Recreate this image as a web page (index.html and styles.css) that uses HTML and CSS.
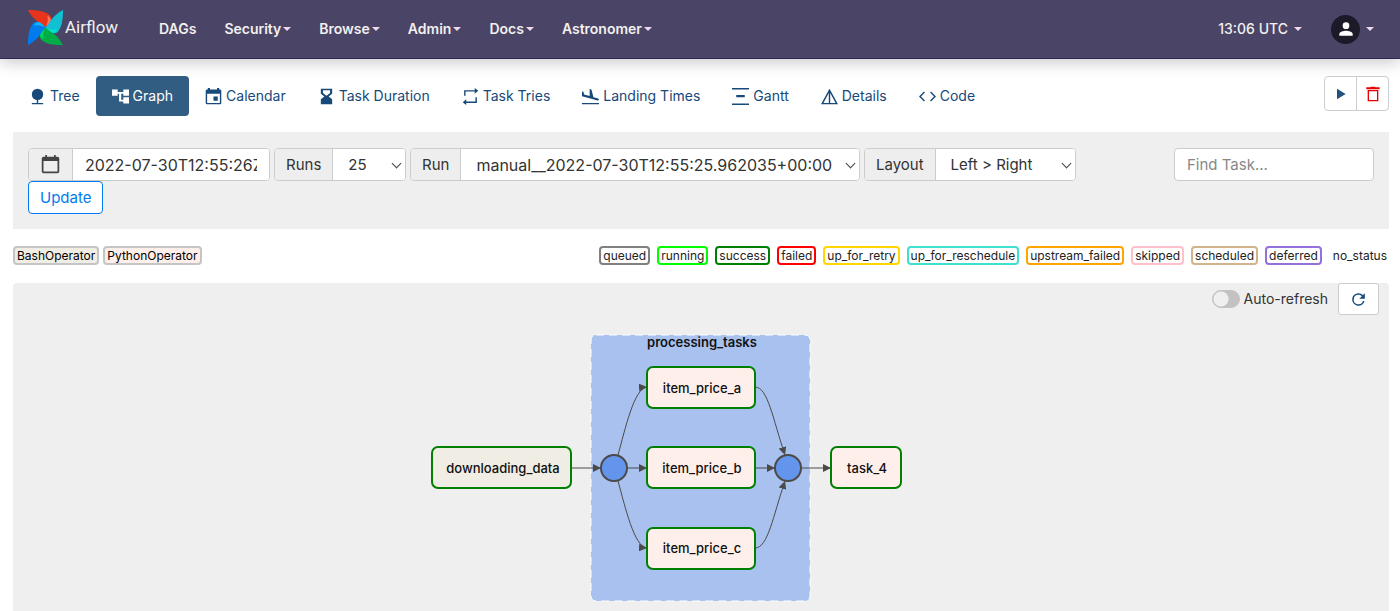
FILE: index.html
```html
<!DOCTYPE html>
<html lang="en">
<head>
<meta charset="utf-8">
<title>Airflow - Graph</title>
<link rel="stylesheet" href="styles.css">
</head>
<body>
<header class="navbar">
  <a class="brand" href="#">
    <svg class="brand-mark" viewBox="0 0 36 36" aria-hidden="true">
      <g><path fill="#e8341c" d="M0 0C9 0 17 1 22 5C25 8 25 11 18 18C15 14 7 13 0 0Z"/><path fill="#ff7557" d="M20 6C25 9 25 12 18 18C20 14 21 11 20 6Z"/></g>
      <g transform="rotate(90 18 18)"><path fill="#11c1d3" d="M0 0C9 0 17 1 22 5C25 8 25 11 18 18C15 14 7 13 0 0Z"/><path fill="#00e5cc" d="M20 6C25 9 25 12 18 18C20 14 21 11 20 6Z"/></g>
      <g transform="rotate(180 18 18)"><path fill="#00ad46" d="M0 0C9 0 17 1 22 5C25 8 25 11 18 18C15 14 7 13 0 0Z"/><path fill="#04d659" d="M20 6C25 9 25 12 18 18C20 14 21 11 20 6Z"/></g>
      <g transform="rotate(270 18 18)"><path fill="#017cee" d="M0 0C9 0 17 1 22 5C25 8 25 11 18 18C15 14 7 13 0 0Z"/><path fill="#0cb6ff" d="M20 6C25 9 25 12 18 18C20 14 21 11 20 6Z"/></g>
    </svg>
    <span>Airflow</span>
  </a>
  <nav class="menu" aria-label="Main">
    <a href="#">DAGs</a>
    <a class="caret" href="#">Security</a>
    <a class="caret" href="#">Browse</a>
    <a class="caret" href="#">Admin</a>
    <a class="caret" href="#">Docs</a>
    <a class="caret" href="#">Astronomer</a>
  </nav>
  <a class="clock caret" href="#">13:06 UTC</a>
  <a class="user caret" href="#" aria-label="User menu">
    <span class="avatar"><svg viewBox="0 0 24 24"><circle cx="12" cy="8" r="4"/><path d="M12 14C9.300 14 4 15.300 4 18V20H20V18C20 15.300 14.700 14 12 14Z"/></svg></span>
  </a>
</header>

<main class="page">
  <div class="toolbar">
    <nav class="tabs" aria-label="DAG views">
      <a href="#"><svg viewBox="0 0 24 24"><circle cx="12" cy="9" r="8"/><path d="M11 16h2v5h-2zM4 21h16v2H4z"/></svg>Tree</a>
      <a class="active" href="#"><svg viewBox="0 0 24 24"><path d="M24 11V2h-8v3.500H8V2H0v9h8V8h2v11h6v3h8v-9h-8v3.500h-3V8h3v3z"/></svg>Graph</a>
      <a href="#"><svg viewBox="0 0 24 24"><path d="M18 12h-6v6h6v-6zM17 0v2H7V0H4v2H3C1.900 2 1 2.900 1 4v17a2 2 0 0 0 2 2h18c1.100 0 2-.9 2-2V4c0-1.100-.9-2-2-2h-1V0h-3zm4 21H3V8h18v13z"/></svg>Calendar</a>
      <a href="#"><svg viewBox="0 0 24 24"><path d="M4 1v7l5 4-5 4v7h16v-7l-5-4 5-4V1H4zm13 6l-5 4-5-4V3h10v4z"/></svg>Task Duration</a>
      <a href="#"><svg viewBox="0 0 24 24"><path d="M3 3h15V0l5 4-5 4V5H5v6H3zM21 21H6v3l-5-4 5-4v3h13v-6h2z"/></svg>Task Tries</a>
      <a href="#"><svg viewBox="0 0 24 24"><path d="M0 21h24v2H0zM8 13.800l14 3.800c.8.200 1.600-.3 1.800-1 .2-.8-.2-1.600-1-1.800l-6.600-1.800L13.300 2l-2.500-.6v9.800l-7.800-2.200L2 5.300l-2-.4v6.600z"/></svg>Landing Times</a>
      <a href="#"><svg viewBox="0 0 24 24"><path d="M0 0h24v2H0zM6 10h12v3H6zM0 22h24v2H0z"/></svg>Gantt</a>
      <a href="#"><svg viewBox="0 0 24 24"><path fill-rule="evenodd" d="M12 1L0 23h24zM11 7v14H3.400zM13 7l7.600 14H13z"/></svg>Details</a>
      <a href="#"><svg viewBox="0 0 24 24"><path d="M8.400 17.600L2.800 12l5.600-5.600L7 5l-7 7 7 7zM15.600 17.600l5.600-5.600-5.600-5.600L17 5l7 7-7 7z"/></svg>Code</a>
    </nav>
    <div class="actions">
      <button type="button" aria-label="Trigger DAG"><svg viewBox="0 0 24 24"><path d="M6 4v16l13-8z"/></svg></button>
      <button class="danger" type="button" aria-label="Delete DAG"><svg viewBox="0 0 24 24"><path fill-rule="evenodd" d="M16 2l-1-1H9L8 2H2v3h20V2zM4 6v17h16V6zm2 2h12v13H6z"/></svg></button>
    </div>
  </div>

  <form class="filters">
    <div class="fields">
      <div class="group date">
        <label for="base-date" aria-label="Base date"><svg viewBox="0 0 24 24"><path d="M20 3h-2V1h-2v2H8V1H6v2H4a2 2 0 0 0-2 2v15a2 2 0 0 0 2 2h16a2 2 0 0 0 2-2V5a2 2 0 0 0-2-2zm0 17H4V8h16v12z"/></svg></label>
        <input id="base-date" type="text" value="2022-07-30T12:55:26Z">
      </div>
      <div class="group pick runs"><label for="runs">Runs</label><select id="runs"><option>25</option></select></div>
      <div class="group pick run"><label for="run">Run</label><select id="run"><option>manual__2022-07-30T12:55:25.962035+00:00</option></select></div>
      <div class="group pick layout"><label for="layout">Layout</label><select id="layout"><option>Left &gt; Right</option></select></div>
      <button class="update" type="submit">Update</button>
    </div>
    <input class="search" type="search" placeholder="Find Task..." aria-label="Find Task">
  </form>

  <div class="legend">
    <div class="operators"><span class="bash">BashOperator</span><span class="python">PythonOperator</span></div>
    <div class="states">
      <span class="queued">queued</span><span class="running">running</span><span class="success">success</span><span class="failed">failed</span><span class="retry">up_for_retry</span><span class="reschedule">up_for_reschedule</span><span class="upstream">upstream_failed</span><span class="skipped">skipped</span><span class="scheduled">scheduled</span><span class="deferred">deferred</span><span class="none">no_status</span>
    </div>
  </div>

  <section class="graph">
    <div class="graph-tools">
      <label class="switch"><input type="checkbox">Auto-refresh</label>
      <button type="button" aria-label="Refresh"><svg viewBox="0 0 24 24"><path d="M17.650 6.350A7.960 7.960 0 0 0 12 4a8 8 0 1 0 7.730 10h-2.080A6 6 0 1 1 12 6c1.660 0 3.140.69 4.220 1.780L13 11h7V4z"/></svg></button>
    </div>
    <svg class="dag" viewBox="431 315 540 296" role="img" aria-label="DAG graph">
      <defs>
        <marker id="arrow" viewBox="0 0 8 8" refX="8" refY="4" markerWidth="8" markerHeight="8" markerUnits="userSpaceOnUse" orient="auto"><path class="arrowhead" d="M0 0L8 4L0 8z"/></marker>
      </defs>
      <rect class="cluster" x="591" y="335" width="219" height="266" rx="5"/>
      <text class="cluster-name" x="702" y="347">processing_tasks</text>
      <g class="edges">
        <path d="M572 468H601"/>
        <path d="M618 455C625 430 634 388 647 387"/>
        <path d="M628 468H647"/>
        <path d="M618 481C625 506 634 547 647 548"/>
        <path d="M755 387C768 387 773 420 785 455"/>
        <path d="M755 468H775"/>
        <path d="M755 548C768 548 773 516 785 481"/>
        <path d="M802 468H831"/>
      </g>
      <circle class="join" cx="614" cy="468" r="13"/>
      <circle class="join" cx="788" cy="468" r="13"/>
      <g class="task">
        <rect class="bash-node" x="432" y="447" width="139" height="41" rx="6"/><text x="503" y="473">downloading_data</text>
        <rect x="647" y="367" width="108" height="41" rx="6"/><text x="702" y="393">item_price_a</text>
        <rect x="647" y="447" width="108" height="41" rx="6"/><text x="702" y="473">item_price_b</text>
        <rect x="647" y="528" width="108" height="41" rx="6"/><text x="702" y="553">item_price_c</text>
        <rect x="831" y="447" width="70" height="41" rx="6"/><text x="867" y="473">task_4</text>
      </g>
    </svg>
  </section>
</main>
</body>
</html>
```
FILE: styles.css
```css
* { box-sizing: border-box; }
body {
  margin: 0;
  min-height: 100vh;
  display: flex;
  flex-direction: column;
  font: 14px/20px Inter, "Liberation Sans", sans-serif;
  color: #333;
  background: #fff;
}
a { color: inherit; text-decoration: none; }
button, input, select { font: inherit; color: inherit; }
svg { display: block; fill: currentColor; }

.navbar {
  height: 59px;
  display: flex;
  align-items: center;
  padding: 0 26px 0 28px;
  background: #4a4466;
  border-bottom: 1px solid #2f2750;
  box-shadow: 0 2px 16px rgba(0, 0, 0, .25);
  color: #f2f0ee;
  font-weight: 600;
}
.brand { display: flex; align-items: center; gap: 2px; width: 131px; font: 400 17px/24px Roboto, sans-serif; padding-bottom: 4px; }
.brand-mark { width: 35px; height: 35px; }
.menu { display: flex; flex: 1; gap: 28px; }
.caret { display: flex; align-items: center; gap: 2px; }
.caret::after { content: ""; border: 4px solid transparent; border-top-color: #efd9ee; border-bottom: 0; }
.clock { gap: 6px; margin-right: 29px; font-weight: 500; }
.user { gap: 6px; }
.avatar { width: 29px; height: 29px; border-radius: 50%; background: #1c1a28; color: #fff; display: grid; place-items: center; }
.avatar svg { width: 20px; height: 20px; }

.page { flex: 1; display: flex; flex-direction: column; padding: 0 11px 0 13px; }
.toolbar { display: flex; justify-content: space-between; align-items: flex-start; padding: 17px 0 16px; }
.tabs { display: flex; color: #17497a; }
.tabs a { height: 40px; display: flex; align-items: center; gap: 4px; padding: 0 16px; border-radius: 4px; }
.tabs svg { width: 17px; height: 17px; }
.tabs .active { background: #325d83; color: #fff; }
.actions { display: flex; color: #23527c; }
.actions button { width: 33px; height: 35px; display: grid; place-items: center; padding: 0; background: #fff; border: 1px solid #ccc; border-radius: 4px 0 0 4px; }
.actions button + button { margin-left: -1px; border-radius: 0 4px 4px 0; }
.actions svg { width: 16px; height: 16px; }
.actions .danger { color: #e80000; }

.filters { display: flex; justify-content: space-between; align-items: flex-start; padding: 16px 15px 15px; background: #efefef; font-size: 15px; }
.fields { display: flex; flex-wrap: wrap; column-gap: 4px; width: 83%; }
.group { position: relative; display: flex; height: 33px; border: 1px solid #ccc; border-radius: 4px; background: #fff; overflow: hidden; }
.group label { display: grid; place-items: center; background: #eee; border-right: 1px solid #ccc; padding: 0 11px; }
.group input, .group select { flex: 1; min-width: 0; border: 0; background: #fff; padding: 0 12px; }
.group select { appearance: none; padding: 0 15px; }
.pick::after { content: ""; position: absolute; right: 5px; top: 11px; width: 6px; height: 6px; border: solid #444; border-width: 0 1px 1px 0; transform: rotate(45deg); pointer-events: none; }
.group svg { width: 21px; height: 21px; color: #444; }
.date { width: 242px; }
.runs { width: 132px; }
.run { width: 450px; }
.date input, .run select { font-size: 16px; }
.layout { width: 212px; }
.update { height: 33px; padding: 0 11px; background: #fff; border: 1px solid #017cee; border-radius: 4px; color: #017cee; }
.search { width: 200px; height: 33px; padding: 0 12px; background: #fff; border: 1px solid #ccc; border-radius: 4px; }
.search::placeholder { color: #888; }

.legend { display: flex; justify-content: space-between; padding: 17px 0 18px; font-size: 12px; line-height: 15px; }
.operators, .states { display: flex; gap: 4px; color: #000; }
.states { gap: 7px; color: #222; }
.legend span { border: 2px solid #c5c5c5; border-radius: 4px; padding: 0 2px; }
.legend .bash { background: #f0ede4; }
.legend .python { background: #ffefeb; }
.legend .queued { border-color: gray; }
.legend .running { border-color: lime; }
.legend .success { border-color: green; }
.legend .failed { border-color: red; }
.legend .retry { border-color: gold; }
.legend .reschedule { border-color: turquoise; }
.legend .upstream { border-color: orange; }
.legend .skipped { border-color: pink; }
.legend .scheduled { border-color: tan; }
.legend .deferred { border-color: mediumpurple; }
.legend .none { border-color: transparent; padding-right: 0; }

.graph { flex: 1; background: #efefef; border-radius: 4px 4px 0 0; }
.graph-tools { height: 32px; display: flex; justify-content: flex-end; align-items: center; gap: 10px; padding-right: 10px; }
.switch { display: flex; align-items: center; gap: 4px; }
.switch input { appearance: none; width: 28px; height: 18px; margin: 0; border-radius: 9px; border: 1px solid #c3c2c1; background: radial-gradient(circle at 8px 8px, #efefef 7px, #c3c2c1 8px); }
.graph-tools button { width: 41px; height: 32px; display: grid; place-items: center; padding: 0; background: #fff; border: 1px solid #ccc; border-radius: 3px; color: #17497a; }
.graph-tools button svg { width: 19px; height: 19px; }
.dag { width: 540px; height: 296px; margin: 0 auto; }
.dag text { fill: #111; font-size: 13px; font-weight: 500; text-anchor: middle; }
.dag .cluster-name { font-weight: 600; }
.cluster { fill: #a9c1ef; stroke: #fff; stroke-dasharray: 8 5; }
.edges path { fill: none; stroke: #4c4a48; marker-end: url(#arrow); }
.arrowhead { fill: #4c4a48; }
.join { fill: #6495ed; stroke: #4c4a48; stroke-width: 2px; }
.task rect { fill: #ffefeb; stroke: green; stroke-width: 2px; }
.task .bash-node { fill: #f0ede4; }
```
